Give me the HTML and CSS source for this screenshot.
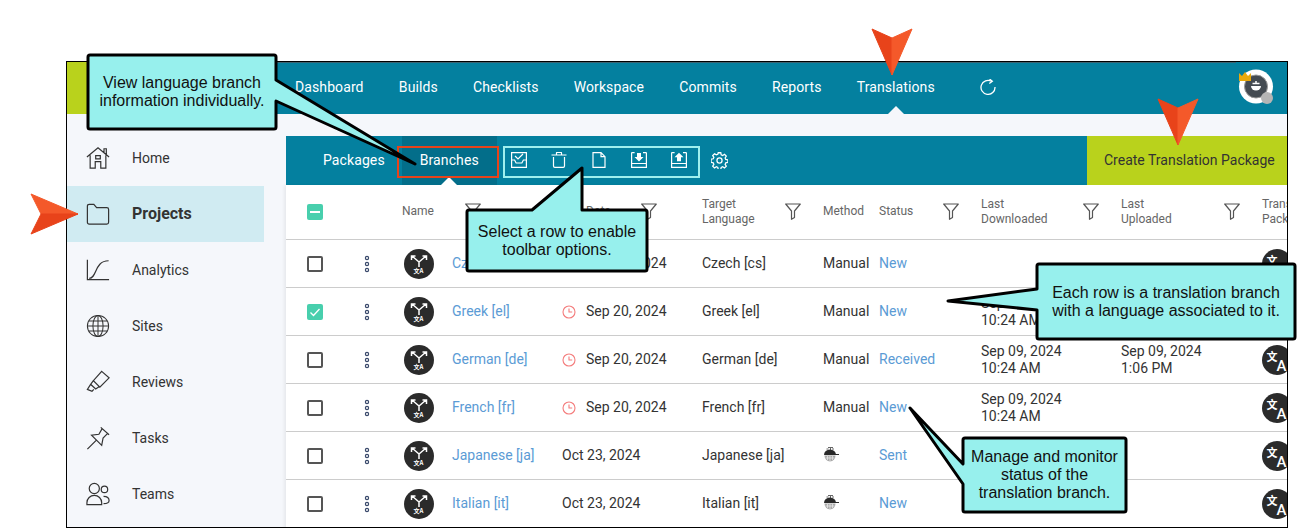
FILE: index.html
```html
<!DOCTYPE html>
<html lang="en">
<head>
  <meta charset="UTF-8">
  <title>Translations - Branches</title>
  <link rel="stylesheet" href="styles.css">
</head>
<body>
  <svg width="0" height="0" class="defs">
    <symbol id="filter" viewBox="0 0 16 17"><path d="M.7 1h14.600l-5.800 7v6.500l-3 1.800V8z" fill="none" stroke="currentColor" stroke-width="1.200" stroke-linejoin="round"/></symbol>
    <symbol id="dots" viewBox="0 0 6 18"><g fill="none" stroke="#39496b" stroke-width="1.2"><circle cx="3" cy="3" r="1.6"/><circle cx="3" cy="9" r="1.6"/><circle cx="3" cy="15" r="1.6"/></g></symbol>
    <symbol id="branch" viewBox="0 0 30 30">
      <circle cx="15" cy="15" r="15" fill="#2b2b2b"/>
      <path d="M15 18v-5M15 13L8 7M15 13l7-6M7.500 11V7h4M18.500 7h4v4" fill="none" stroke="#fff" stroke-width="1.500"/>
      <text x="14.500" y="24" text-anchor="middle" class="mini">文A</text>
    </symbol>
    <symbol id="translate" viewBox="0 0 30 30">
      <circle cx="15" cy="15" r="15" fill="#2b2b2b"/>
      <text x="10" y="16" text-anchor="middle" class="zi">文</text>
      <text x="19.500" y="26" text-anchor="middle" class="big-a">A</text>
    </symbol>
    <symbol id="clock" viewBox="0 0 14 14"><circle cx="7" cy="7" r="6" fill="none" stroke="#f47c7c" stroke-width="1.100"/><path d="M7 3.500V7h3.200" fill="none" stroke="#f47c7c" stroke-width="1.100"/></symbol>
    <symbol id="robot" viewBox="0 0 16 15">
      <path d="M5 .5h5M3.500 2h2M9 2h2M7.500 1v2" stroke="#666" stroke-width="1"/>
      <path d="M1 8a6 5.500 0 0 1 12 0z" fill="#2a2a2a"/>
      <path d="M12 7.500h4" stroke="#2a2a2a" stroke-width="1"/>
      <path d="M1.500 8.500h11a5.500 6 0 0 1-11 0z" fill="#a9a9a9"/>
      <path d="M4.500 9v4M7 9v5.500M9.500 9v4M2.500 11h9" stroke="#eee" stroke-width=".7"/>
    </symbol>
  </svg>

  <div class="frame">
    <header class="topbar">
      <div class="brand"></div>
      <nav class="topnav">
        <a>Dashboard</a>
        <a>Builds</a>
        <a>Checklists</a>
        <a>Workspace</a>
        <a>Commits</a>
        <a>Reports</a>
        <a class="current">Translations</a>
        <svg class="refresh" width="16" height="16" viewBox="0 0 16 16"><path d="M11.500 2.300A7 7 0 1 0 15 8" fill="none" stroke="#fff" stroke-width="1.300"/><path d="M9.500 0l2.800 2.300-3 2.200" fill="none" stroke="#fff" stroke-width="1.300"/></svg>
      </nav>
      <div class="avatar">
        <svg width="38" height="38" viewBox="0 0 38 38">
          <circle cx="20" cy="18.500" r="17" fill="#fff"/>
          <circle cx="20" cy="18.500" r="11.500" fill="#444b52" stroke="#999" stroke-width="1"/>
          <path d="M15 18h10a5 4.500 0 0 1-10 0z" fill="#fff"/>
          <path d="M16.500 15.500h7M20 13v2" stroke="#fff" stroke-width="1.500"/>
          <path d="M3 5l3 3 3-4 3 4 3-3v8H3z" fill="#e8a90c"/>
          <circle cx="31" cy="30" r="6" fill="#b5b5b5"/>
        </svg>
      </div>
    </header>

    <div class="layout">
      <aside class="sidebar">
        <a class="side-item">
          <svg class="side-icon" viewBox="0 0 26 26"><path d="M1 12L13 2l12 10M4.500 10v14h5.500v-7h6v7h5.500V10M10.500 10.500h5v3.500h-5zM19.500 7V3h2.500v6" fill="none" stroke="currentColor" stroke-width="1.300"/></svg>
          <span>Home</span>
        </a>
        <a class="side-item active">
          <svg class="side-icon" viewBox="0 0 26 26"><path d="M1.500 22V4.500q0-2 2-2h5l3 3.500h11q2 0 2 2V22q0 2-2 2h-19q-2 0-2-2z" fill="none" stroke="currentColor" stroke-width="1.300"/></svg>
          <span>Projects</span>
        </a>
        <a class="side-item">
          <svg class="side-icon" viewBox="0 0 26 26"><path d="M1.500 2v21.500h23.500M3.500 22C12 22 9 3 24.500 3" fill="none" stroke="currentColor" stroke-width="1.300"/></svg>
          <span>Analytics</span>
        </a>
        <a class="side-item">
          <svg class="side-icon" viewBox="0 0 26 26"><g fill="none" stroke="currentColor" stroke-width="1.100"><circle cx="13" cy="13" r="11.500"/><ellipse cx="13" cy="13" rx="5.500" ry="11.500"/><path d="M13 1.500v23M1.500 13h23M3 7.500h20M3 18.500h20"/></g></svg>
          <span>Sites</span>
        </a>
        <a class="side-item">
          <svg class="side-icon" viewBox="0 0 26 26"><path d="M17 1.500l8 7-10 10-7-7zM8 11.500l-3 4 5.500 5 4-2.500M5 15.500L1.500 21l5 2 2-2" fill="none" stroke="currentColor" stroke-width="1.300"/></svg>
          <span>Reviews</span>
        </a>
        <a class="side-item">
          <svg class="side-icon" viewBox="0 0 26 26"><path d="M16 1.500l9 8M17.500 2.800L14 9 6 10l11 11 1.500-8 5-5M11 15.500L1.500 25" fill="none" stroke="currentColor" stroke-width="1.300"/></svg>
          <span>Tasks</span>
        </a>
        <a class="side-item">
          <svg class="side-icon" viewBox="0 0 26 26"><g fill="none" stroke="currentColor" stroke-width="1.300"><circle cx="9" cy="7" r="5.500"/><circle cx="20" cy="8" r="3.500"/><path d="M1 24.500v-2a8 8 0 0 1 16 0v2zM19 15.500c4 0 6 1.500 6 4.500s-3 3.500-6 3.500"/></g></svg>
          <span>Teams</span>
        </a>
      </aside>

      <main class="content">
        <div class="toolbar">
          <a class="tab">Packages</a>
          <a class="tab tab-active">Branches</a>
          <div class="tools">
            <svg width="16" height="16" viewBox="0 0 16 16"><path d="M.6.600h14.800v14.800H.6zM.6 8h3l1.500 3h5.800l1.500-3h2.500M4 4l3 3 5-5" fill="none" stroke="#fff" stroke-width="1.200"/></svg>
            <svg width="16" height="16" viewBox="0 0 16 16"><path d="M.5 3h15M5.500 3V1q0-.5.5-.5h4q.5 0 .5.500v2M2.500 5v9q0 1.300 1.300 1.300h8.400q1.300 0 1.300-1.300V5" fill="none" stroke="#fff" stroke-width="1.200"/></svg>
            <svg width="16" height="16" viewBox="0 0 16 16"><path d="M2 .7h8l4 4v10.600H2zM10 .7v4h4" fill="none" stroke="#fff" stroke-width="1.200"/></svg>
            <svg width="16" height="16" viewBox="0 0 16 16"><path d="M.6.600v14.800h14.800V.6M.6 11.500h14.800" fill="none" stroke="#fff" stroke-width="1.200"/><path d="M.6.600h3M12 .6h3.400" stroke="#fff" stroke-width="1.200"/><path d="M6 1h4v4h2.500L8 9.500 3.500 5H6z" fill="#fff"/></svg>
            <svg width="16" height="16" viewBox="0 0 16 16"><path d="M.6.600v14.800h14.800V.6M.6 11.500h14.800" fill="none" stroke="#fff" stroke-width="1.200"/><path d="M.6.600h3M12 .6h3.400" stroke="#fff" stroke-width="1.200"/><path d="M8 .8L12.500 5.300H10v4H6v-4H3.500z" fill="#fff"/></svg>
          </div>
          <svg class="gear" width="17" height="17" viewBox="0 0 16 16"><path d="M6.800.7h2.400l.4 2 1.400.6 1.700-1.100 1.700 1.700-1.100 1.700.6 1.400 2 .4v2.400l-2 .4-.6 1.400 1.100 1.700-1.700 1.700-1.700-1.100-1.400.6-.4 2H6.800l-.4-2-1.400-.6-1.700 1.100-1.700-1.700 1.100-1.700-.6-1.400-2-.4V6.800l2-.4.6-1.400-1.100-1.700 1.700-1.700L5 2.700l1.400-.6z" fill="none" stroke="#fff" stroke-width="1.200"/><circle cx="8" cy="8" r="2.400" fill="none" stroke="#fff" stroke-width="1.200"/></svg>
          <a class="create">Create Translation Package</a>
        </div>

        <div class="table">
          <div class="row head">
            <span class="box minus"></span>
            <span></span>
            <div class="th th-name">Name<svg class="filter"><use href="#filter"/></svg></div>
            <div class="th th-date">Date<svg class="filter"><use href="#filter"/></svg></div>
            <div class="th">Target<br>Language<svg class="filter"><use href="#filter"/></svg></div>
            <div class="th">Method</div>
            <div class="th">Status<svg class="filter"><use href="#filter"/></svg></div>
            <div class="th">Last<br>Downloaded<svg class="filter"><use href="#filter"/></svg></div>
            <div class="th">Last<br>Uploaded<svg class="filter"><use href="#filter"/></svg></div>
            <div class="th">Translation<br>Package</div>
          </div>

          <div class="row">
            <span class="box"></span>
            <svg class="dots"><use href="#dots"/></svg>
            <svg class="round"><use href="#branch"/></svg>
            <a class="link">Czech [cs]</a>
            <div class="due"><svg class="clock"><use href="#clock"/></svg>Sep 20, 2024</div>
            <div>Czech [cs]</div>
            <div>Manual</div>
            <a class="link">New</a>
            <div></div>
            <div></div>
            <svg class="round"><use href="#translate"/></svg>
          </div>

          <div class="row">
            <span class="box checked"><svg width="16" height="16" viewBox="0 0 16 16"><path d="M3.500 8.500l3 3 6-6.500" fill="none" stroke="#fff" stroke-width="1.300"/></svg></span>
            <svg class="dots"><use href="#dots"/></svg>
            <svg class="round"><use href="#branch"/></svg>
            <a class="link">Greek [el]</a>
            <div class="due"><svg class="clock"><use href="#clock"/></svg>Sep 20, 2024</div>
            <div>Greek [el]</div>
            <div>Manual</div>
            <a class="link">New</a>
            <div>Sep 09, 2024<br>10:24 AM</div>
            <div></div>
            <svg class="round"><use href="#translate"/></svg>
          </div>

          <div class="row">
            <span class="box"></span>
            <svg class="dots"><use href="#dots"/></svg>
            <svg class="round"><use href="#branch"/></svg>
            <a class="link">German [de]</a>
            <div class="due"><svg class="clock"><use href="#clock"/></svg>Sep 20, 2024</div>
            <div>German [de]</div>
            <div>Manual</div>
            <a class="link">Received</a>
            <div>Sep 09, 2024<br>10:24 AM</div>
            <div>Sep 09, 2024<br>1:06 PM</div>
            <svg class="round"><use href="#translate"/></svg>
          </div>

          <div class="row">
            <span class="box"></span>
            <svg class="dots"><use href="#dots"/></svg>
            <svg class="round"><use href="#branch"/></svg>
            <a class="link">French [fr]</a>
            <div class="due"><svg class="clock"><use href="#clock"/></svg>Sep 20, 2024</div>
            <div>French [fr]</div>
            <div>Manual</div>
            <a class="link">New</a>
            <div>Sep 09, 2024<br>10:24 AM</div>
            <div></div>
            <svg class="round"><use href="#translate"/></svg>
          </div>

          <div class="row">
            <span class="box"></span>
            <svg class="dots"><use href="#dots"/></svg>
            <svg class="round"><use href="#branch"/></svg>
            <a class="link">Japanese [ja]</a>
            <div>Oct 23, 2024</div>
            <div>Japanese [ja]</div>
            <svg class="robot"><use href="#robot"/></svg>
            <a class="link">Sent</a>
            <div></div>
            <div></div>
            <svg class="round"><use href="#translate"/></svg>
          </div>

          <div class="row">
            <span class="box"></span>
            <svg class="dots"><use href="#dots"/></svg>
            <svg class="round"><use href="#branch"/></svg>
            <a class="link">Italian [it]</a>
            <div>Oct 23, 2024</div>
            <div>Italian [it]</div>
            <svg class="robot"><use href="#robot"/></svg>
            <a class="link">New</a>
            <div></div>
            <div></div>
            <svg class="round"><use href="#translate"/></svg>
          </div>
        </div>
      </main>
    </div>
  </div>

  <!-- annotations drawn over the screenshot -->
  <div class="notes">
    <svg class="notes-art" width="1305" height="528" viewBox="0 0 1305 528">
      <rect x="398" y="147" width="100" height="30" fill="none" stroke="#e8431a" stroke-width="2"/>
      <rect x="504" y="147" width="195" height="30" fill="none" stroke="#9ff0ee" stroke-width="2"/>

      <g fill="#97f0ed" stroke="#000" stroke-width="3" stroke-linejoin="round">
        <path d="M90 55H274q2 0 2 2V80L415 164 276 101V127q0 2-2 2H90q-2 0-2-2V57q0-2 2-2z"/>
        <path d="M469 210H532L582 168V210H645q2 0 2 2V269q0 2-2 2H469q-2 0-2-2V212q0-2 2-2z"/>
        <path d="M1039 264H1293q2 0 2 2V337q0 2-2 2H1039q-2 0-2-2V310L948 301 1037 289V266q0-2 2-2z"/>
        <path d="M965 438H1124q2 0 2 2V510q0 2-2 2H965q-2 0-2-2V484L910 408 963 464V440q0-2 2-2z"/>
      </g>

      <path d="M872 29L892 38V75z" fill="#e8431a" stroke="#e8431a" stroke-linejoin="round"/>
      <path d="M912 29L892 38V75z" fill="#f4592a" stroke="#f4592a" stroke-linejoin="round"/>
      <path d="M1158 99L1178 108V145z" fill="#e8431a" stroke="#e8431a" stroke-linejoin="round"/>
      <path d="M1198 99L1178 108V145z" fill="#f4592a" stroke="#f4592a" stroke-linejoin="round"/>
      <path d="M31 194L41 214H78z" fill="#f4592a" stroke="#f4592a" stroke-linejoin="round"/>
      <path d="M31 234L41 214H78z" fill="#e8431a" stroke="#e8431a" stroke-linejoin="round"/>
    </svg>
    <div class="note note-branch">View language branch<br>information individually.</div>
    <div class="note note-select">Select a row to enable<br>toolbar options.</div>
    <div class="note note-row">Each row is a translation branch<br>with a language associated to it.</div>
    <div class="note note-status">Manage and monitor<br>status of the<br>translation branch.</div>
  </div>
</body>
</html>
```

FILE: styles.css
```css
* {
  box-sizing: border-box;
}

html,
body {
  height: 528px;
  margin: 0;
  overflow: hidden;
}

body {
  background: #fff;
  font-family: Roboto, Arial, sans-serif;
  font-size: 14px;
  color: #333;
  padding: 61px 0 0 66px;
}

.defs {
  position: absolute;
}

.mini {
  font-family: "Noto Sans CJK SC", sans-serif;
  font-size: 6px;
  font-weight: 700;
  fill: #fff;
}

.zi {
  font-family: "Noto Sans CJK SC", sans-serif;
  font-size: 11px;
  font-weight: 700;
  fill: #fff;
}

.big-a {
  font-family: Roboto, sans-serif;
  font-size: 15px;
  font-weight: 500;
  fill: #fff;
}

.frame {
  width: 1222px;
  height: 467px;
  border: 1px solid #000;
  overflow: hidden;
  display: flex;
  flex-direction: column;
}

/* top bar */
.topbar {
  height: 52px;
  flex: none;
  background: #04809f;
  display: flex;
  align-items: center;
  position: relative;
}

.brand {
  width: 210px;
  height: 100%;
  background: #b9d21c;
}

.topnav {
  display: flex;
  align-items: center;
  gap: 35.200px;
  padding-left: 18px;
  color: #fff;
  font-size: 14px;
  letter-spacing: 0.1px;
  height: 100%;
  flex: 1;
  box-shadow: inset 0 1px 0 #3b6472;
}

.topnav a {
  height: 100%;
  display: flex;
  align-items: center;
  position: relative;
  padding-bottom: 2px;
}

.topnav .current::after,
.tab-active::after {
  content: "";
  position: absolute;
  left: 50%;
  bottom: 0;
  margin-left: -8px;
  border: 8px solid transparent;
  border-top: 0;
  border-bottom-color: #f5f7fb;
}

.tab-active::after {
  border-bottom-color: #fff;
}

.refresh {
  margin-left: 10px;
  margin-top: -2px;
}

.avatar {
  width: 38px;
  height: 38px;
  margin-right: 13px;
  margin-top: -2px;
}

/* sidebar and content */
.layout {
  display: flex;
  flex: 1;
  min-height: 0;
  background: #f5f7fb;
}

.sidebar {
  width: 219px;
  flex: none;
  padding-top: 16px;
}

.side-item {
  width: 197px;
  height: 56px;
  display: flex;
  align-items: center;
  gap: 22px;
  padding-left: 19px;
  color: #333;
}

.side-item.active {
  background: #d0ebf2;
  font-size: 16px;
  font-weight: 700;
}

.side-item.active span {
  margin-top: -2px;
}

.side-icon {
  width: 24px;
  height: 24px;
  flex: none;
}

.content {
  flex: 1;
  min-width: 0;
  padding-top: 22px;
}

.toolbar {
  height: 49px;
  background: #04809f;
  color: #fff;
  display: flex;
  align-items: center;
  padding-left: 37px;
}

.tab {
  letter-spacing: 0.1px;
  padding-bottom: 2px;
}

.tab-active {
  position: relative;
  width: 95px;
  height: 100%;
  margin-left: 17px;
  background: #036e8a;
  display: flex;
  align-items: center;
  justify-content: center;
}

.tools {
  display: flex;
  gap: 24px;
  margin-left: 14px;
  margin-top: -1px;
}

.gear {
  margin-left: 24px;
  margin-top: -1px;
}

.create {
  margin-left: auto;
  width: 200px;
  height: 100%;
  background: #b9d21c;
  color: #333;
  display: flex;
  align-items: center;
  padding: 0 0 2px 17px;
}

/* table */
.table {
  background: #fff;
  box-shadow: -2px 0 3px rgba(0, 0, 0, 0.06);
  height: 344px;
  overflow: hidden;
}

.row {
  display: grid;
  grid-template-columns: 52px 45px 48px 110px 140px 121px 56px 102px 140px 141px 30px;
  align-items: center;
  height: 48px;
  padding-left: 21px;
  border-bottom: 1px solid #ccc;
  line-height: 17px;
}

.row.head {
  height: 55px;
  grid-template-columns: 52px 43px 160px 140px 121px 56px 102px 140px 141px 80px;
  color: #666;
  font-size: 12px;
  line-height: 15px;
}

.th {
  position: relative;
  margin-top: -2px;
  padding-top: 1px;
}

.filter {
  position: absolute;
  top: 50%;
  right: 22px;
  width: 16px;
  height: 17px;
  margin-top: -8px;
  color: #555;
}

.th-name .filter {
  right: 81px;
}

.th-date {
  padding-left: 24px;
}

.th-date .filter {
  right: 45px;
}

.box {
  width: 16px;
  height: 16px;
  border: 2px solid #555;
  border-radius: 2px;
}

.box.checked,
.box.minus {
  border: 0;
  background: #48cfad;
  display: block;
}

.box.minus {
  position: relative;
}

.box.minus::after {
  content: "";
  position: absolute;
  left: 3px;
  right: 3px;
  top: 7px;
  height: 2px;
  background: #fff;
}

.dots {
  width: 6px;
  height: 18px;
  margin-left: 5px;
}

.round {
  width: 30px;
  height: 30px;
}

.link {
  color: #5b9bd5;
}

.due {
  display: flex;
  align-items: center;
  gap: 10px;
}

.clock {
  width: 14px;
  height: 14px;
}

.robot {
  width: 16px;
  height: 15px;
  margin-top: -2px;
}

/* annotations */
.notes {
  position: absolute;
  left: 0;
  top: 0;
  width: 1305px;
  height: 528px;
}

.notes-art {
  position: absolute;
  left: 0;
  top: 0;
}

.note {
  position: absolute;
  display: flex;
  align-items: center;
  justify-content: center;
  text-align: center;
  font-family: "Liberation Sans", Arial, sans-serif;
  font-size: 16px;
  line-height: 18px;
  color: #111;
}

.note-branch {
  left: 88px;
  top: 56px;
  width: 188px;
  height: 72px;
}

.note-select {
  left: 467px;
  top: 210px;
  width: 180px;
  height: 61px;
}

.note-row {
  left: 1037px;
  top: 264px;
  width: 258px;
  height: 75px;
}

.note-status {
  left: 963px;
  top: 438px;
  width: 163px;
  height: 74px;
}
```
